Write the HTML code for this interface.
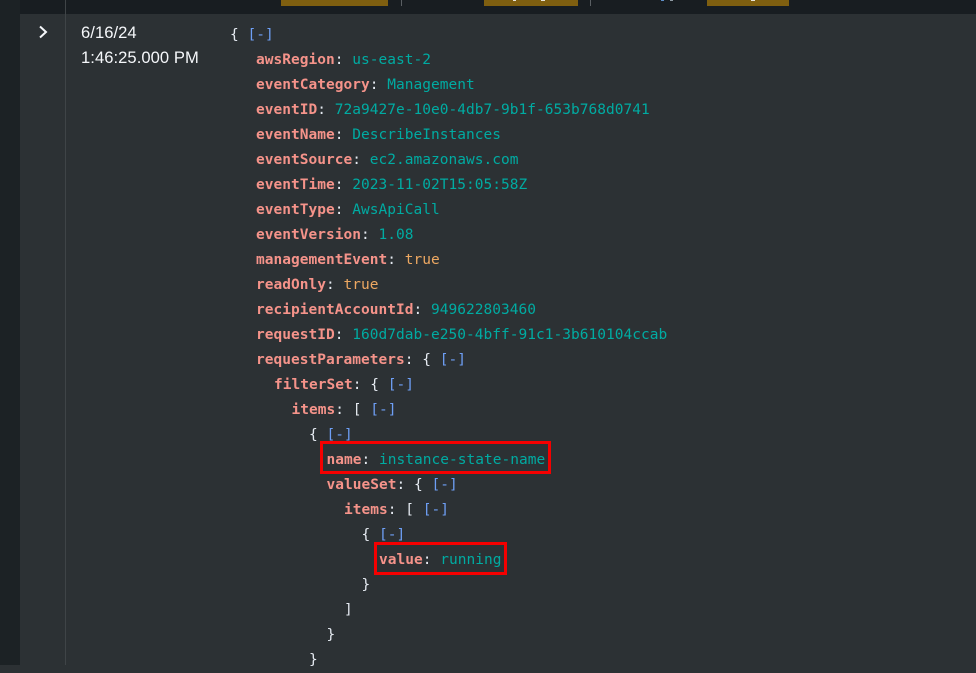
<!DOCTYPE html>
<html>
<head>
<meta charset="utf-8">
<style>
html,body{margin:0;padding:0;width:976px;height:665px;overflow:hidden;background:#2c3134;}
.abs{position:absolute;}
#side{left:0;top:0;width:20px;height:665px;background:#1c2225;}
#head{left:20px;top:0;width:956px;height:14px;background:#181d21;}
#vline{left:65px;top:0;width:1px;height:665px;background:#3f4447;}
.gold{position:absolute;top:0;height:6px;background:#7f5f10;}
.tick{position:absolute;top:0;width:1px;height:6px;background:#5a5f63;}
.dot{position:absolute;top:0;width:3px;height:1px;background:#e8e4d8;}
.date{position:absolute;left:81px;font:16.6px/25px "Liberation Sans",sans-serif;letter-spacing:.05px;color:#f5f7fa;white-space:pre;}
.l{position:absolute;height:25px;margin-top:2px;font:14.5px/25px "DejaVu Sans Mono",monospace;letter-spacing:.02px;white-space:pre;color:#e6ebf2;}
.k{color:#f5938a;font-weight:bold;}
.s{color:#00aba2;}
.b{color:#eda862;}
.c{color:#6e9ff5;}
.box{position:absolute;border:3px solid #f50000;box-sizing:border-box;}
</style>
</head>
<body>
<div class="abs" id="side"></div>
<div class="abs" id="head"></div>
<div class="abs" id="vline"></div>
<div class="gold" style="left:281px;width:107px"></div>
<div class="gold" style="left:484px;width:94px"></div>
<div class="gold" style="left:707px;width:82px"></div>
<div class="tick" style="left:401px"></div>
<div class="tick" style="left:590px"></div>
<div class="dot" style="left:513px"></div>
<div class="dot" style="left:541px;width:4px"></div>
<div class="dot" style="left:661px;background:#5f8fc8"></div>
<div class="dot" style="left:670px;background:#8f9aa3"></div>
<div class="dot" style="left:751px;width:4px"></div>

<svg class="abs" style="left:36px;top:24px" width="14" height="16" viewBox="0 0 14 16"><path d="M4 2.5 L10 8 L4 13.5" fill="none" stroke="#f5f7fa" stroke-width="2"/></svg>

<div class="date" style="top:20px">6/16/24</div>
<div class="date" style="top:45px">1:46:25.000 PM</div>

<div class="l" style="left:230px;top:21px">{ <span class="c">[-]</span></div>
<div class="l" style="left:256px;top:46px"><span class="k">awsRegion</span>: <span class="s">us-east-2</span></div>
<div class="l" style="left:256px;top:71px"><span class="k">eventCategory</span>: <span class="s">Management</span></div>
<div class="l" style="left:256px;top:96px"><span class="k">eventID</span>: <span class="s">72a9427e-10e0-4db7-9b1f-653b768d0741</span></div>
<div class="l" style="left:256px;top:121px"><span class="k">eventName</span>: <span class="s">DescribeInstances</span></div>
<div class="l" style="left:256px;top:146px"><span class="k">eventSource</span>: <span class="s">ec2.amazonaws.com</span></div>
<div class="l" style="left:256px;top:171px"><span class="k">eventTime</span>: <span class="s">2023-11-02T15:05:58Z</span></div>
<div class="l" style="left:256px;top:196px"><span class="k">eventType</span>: <span class="s">AwsApiCall</span></div>
<div class="l" style="left:256px;top:221px"><span class="k">eventVersion</span>: <span class="s">1.08</span></div>
<div class="l" style="left:256px;top:246px"><span class="k">managementEvent</span>: <span class="b">true</span></div>
<div class="l" style="left:256px;top:271px"><span class="k">readOnly</span>: <span class="b">true</span></div>
<div class="l" style="left:256px;top:296px"><span class="k">recipientAccountId</span>: <span class="s">949622803460</span></div>
<div class="l" style="left:256px;top:321px"><span class="k">requestID</span>: <span class="s">160d7dab-e250-4bff-91c1-3b610104ccab</span></div>
<div class="l" style="left:256px;top:346px"><span class="k">requestParameters</span>: { <span class="c">[-]</span></div>
<div class="l" style="left:274px;top:371px"><span class="k">filterSet</span>: { <span class="c">[-]</span></div>
<div class="l" style="left:291.5px;top:396px"><span class="k">items</span>: [ <span class="c">[-]</span></div>
<div class="l" style="left:309px;top:421px">{ <span class="c">[-]</span></div>
<div class="l" style="left:326.5px;top:446px"><span class="k">name</span>: <span class="s">instance-state-name</span></div>
<div class="l" style="left:326.5px;top:471px"><span class="k">valueSet</span>: { <span class="c">[-]</span></div>
<div class="l" style="left:344px;top:496px"><span class="k">items</span>: [ <span class="c">[-]</span></div>
<div class="l" style="left:361.5px;top:521px">{ <span class="c">[-]</span></div>
<div class="l" style="left:379px;top:546px"><span class="k">value</span>: <span class="s">running</span></div>
<div class="l" style="left:361.5px;top:571px">}</div>
<div class="l" style="left:344px;top:596px">]</div>
<div class="l" style="left:326.5px;top:621px">}</div>
<div class="l" style="left:309px;top:646px">}</div>

<div class="box" style="left:320px;top:441px;width:231px;height:33px"></div>
<div class="box" style="left:374px;top:542px;width:133px;height:33px"></div>
</body>
</html>
